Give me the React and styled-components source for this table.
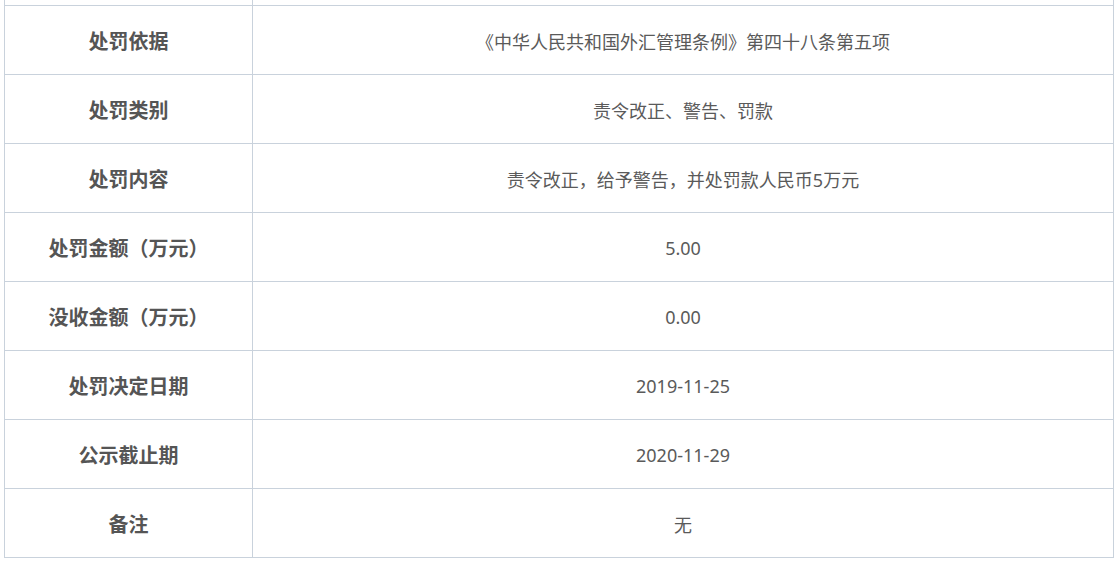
import React from 'react'
import styled, { createGlobalStyle } from 'styled-components'

const rows = [
  { label: '处罚依据', value: '《中华人民共和国外汇管理条例》第四十八条第五项' },
  { label: '处罚类别', value: '责令改正、警告、罚款' },
  { label: '处罚内容', value: '责令改正，给予警告，并处罚款人民币5万元' },
  { label: '处罚金额（万元）', value: '5.00' },
  { label: '没收金额（万元）', value: '0.00' },
  { label: '处罚决定日期', value: '2019-11-25' },
  { label: '公示截止期', value: '2020-11-29' },
  { label: '备注', value: '无' },
]

const GlobalStyle = createGlobalStyle`
  body {
    margin: 0;
    background: #fff;
    font-family: "Noto Sans", "Noto Sans CJK SC", sans-serif;
  }
`

const Sheet = styled.div`
  display: grid;
  grid-template-columns: 248px 861px;
  width: 1110px;
  margin-left: 4px;
  border-left: 1px solid #c9d2dc;
`

const Cell = styled.div`
  box-sizing: border-box;
  height: ${(p) => (p.stub ? '6px' : '69px')};
  padding-top: ${(p) => (p.stub ? '0' : '1px')};
  display: flex;
  align-items: center;
  justify-content: center;
  border-right: 1px solid #c9d2dc;
  border-bottom: 1px solid #c9d2dc;
`

const Label = styled(Cell)`
  font-size: 20px;
  font-weight: 700;
  color: #555;
`

const Value = styled(Cell)`
  font-size: 18px;
  color: #5a5a5a;
`

const App = () => {
  return (
    <>
      <GlobalStyle />
      <Sheet>
        <Label stub />
        <Value stub />
        {rows.map((row) => (
          <React.Fragment key={row.label}>
            <Label>{row.label}</Label>
            <Value>{row.value}</Value>
          </React.Fragment>
        ))}
      </Sheet>
    </>
  )
}

export default App
